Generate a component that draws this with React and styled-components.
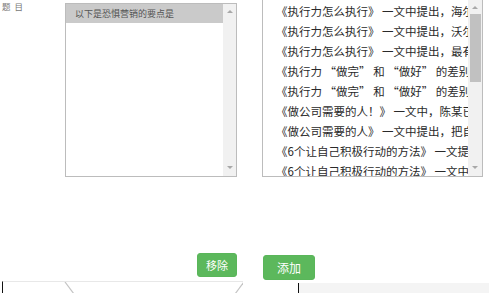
import React from 'react'
import styled, {createGlobalStyle} from "styled-components";

const leftItems = ['以下是恐惧营销的要点是']

const rightItems = [
    '《执行力怎么执行》 一文中提出，海尔',
    '《执行力怎么执行》 一文中提出，沃尔',
    '《执行力怎么执行》 一文中提出，最有',
    '《执行力 “做完” 和 “做好” 的差别》',
    '《执行力 “做完” 和 “做好” 的差别》',
    '《做公司需要的人！》 一文中，陈某已',
    '《做公司需要的人》 一文中提出，把自',
    '《6个让自己积极行动的方法》 一文提出',
    '《6个让自己积极行动的方法》 一文中',
]

function ScrollBar({ width, thumb }) {
    return (
        <StyledScrollBar $width={width}>
            <Arrow $up />
            {thumb ? <Thumb $height={thumb} /> : null}
            <Spacer />
            <Arrow />
        </StyledScrollBar>
    )
}

function App() {
    return (
        <>
            <GlobalStyle />
            <Page>
                <Top>
                    <Label>题 目</Label>
                    <ListBox $width={172} $height={174} $top={3} $gap={25}>
                        <Options>
                            {leftItems.map((item, index) => <LeftOption key={index} $selected={index === 0}>{item}</LeftOption>)}
                        </Options>
                        <ScrollBar width={13} />
                    </ListBox>
                    <ListBox $width={221} $height={177} $top={0} $noTop>
                        <Options>
                            {rightItems.map((item, index) => <RightOption key={index}>{item}</RightOption>)}
                        </Options>
                        <ScrollBar width={14} thumb={68} />
                    </ListBox>
                </Top>
                <Buttons>
                    <Button $left={197} $width={40} $height={24} $size={11}>移除</Button>
                    <Button $left={26} $width={52} $height={25} $size={12} $top={2}>添加</Button>
                </Buttons>
                <Bottom>
                    <Fieldset>
                        <svg width="241" height="12" viewBox="0 0 241 12">
                            <line x1="63" y1="0" x2="72" y2="12" stroke="#c4c4c4" strokeWidth="1.2" />
                            <line x1="242" y1="0" x2="233" y2="12" stroke="#c4c4c4" strokeWidth="1.2" />
                        </svg>
                    </Fieldset>
                    <GreyPanel />
                </Bottom>
            </Page>
        </>
    )
}

const GlobalStyle = createGlobalStyle`
  body {
    margin: 0;
    background: #fff;
    overflow: hidden;
    font-family: "Noto Sans CJK SC", "Liberation Sans", sans-serif;
  }
`

const Page = styled.div`
  width: 489px;
  height: 293px;
  overflow: hidden;
`

const Top = styled.div`
  display: flex;
  align-items: flex-start;
`

const Label = styled.div`
  flex-shrink: 0;
  box-sizing: border-box;
  width: 65px;
  padding: 1px 0 0 2px;
  font-size: 8.5px;
  line-height: 10px;
  letter-spacing: 1px;
  color: #777;
  white-space: pre;
`

const ListBox = styled.div`
  display: flex;
  flex-shrink: 0;
  box-sizing: border-box;
  width: ${p => p.$width}px;
  height: ${p => p.$height}px;
  margin-top: ${p => p.$top}px;
  margin-right: ${p => p.$gap || 0}px;
  border: 1px solid #bcbcbc;
  border-top: ${p => p.$noTop ? 'none' : '1px solid #bcbcbc'};
  background: #fff;
  overflow: hidden;
`

const Options = styled.div`
  flex: 1;
  min-width: 0;
  overflow: hidden;
`

const LeftOption = styled.div`
  height: 19px;
  padding-left: 9px;
  font-size: 9px;
  line-height: 19px;
  color: #555;
  white-space: nowrap;
  background: ${p => p.$selected ? '#cacaca' : 'transparent'};
`

const RightOption = styled.div`
  height: 20px;
  padding-left: 13px;
  font-size: 11.5px;
  line-height: 20px;
  color: #2a2a2a;
  white-space: nowrap;
  overflow: hidden;
  &:first-child {
    margin-top: 1px;
  }
`

const StyledScrollBar = styled.div`
  display: flex;
  flex-direction: column;
  align-items: center;
  width: ${p => p.$width}px;
  flex-shrink: 0;
  background: #f1f1f1;
`

const Arrow = styled.div`
  width: 0;
  height: 0;
  margin: ${p => p.$up ? '6px 0 6px' : '6px 0 7px'};
  border-left: 3px solid transparent;
  border-right: 3px solid transparent;
  ${p => p.$up ? 'border-bottom: 3px solid #a8a8a8;' : 'border-top: 3px solid #a8a8a8;'}
`

const Thumb = styled.div`
  width: 11px;
  height: ${p => p.$height}px;
  background: #c1c1c1;
  margin-top: -1px;
`

const Spacer = styled.div`
  flex: 1;
`

const Buttons = styled.div`
  display: flex;
  align-items: flex-start;
  height: 28px;
  margin-top: 76px;
`

const Button = styled.button`
  box-sizing: border-box;
  flex-shrink: 0;
  width: ${p => p.$width}px;
  height: ${p => p.$height}px;
  margin-left: ${p => p.$left}px;
  margin-top: ${p => p.$top || 0}px;
  padding: 0;
  border: 1px solid #5ab65a;
  border-radius: 3px;
  background: #5cb85c;
  color: #fff;
  font-family: "Noto Sans CJK SC", sans-serif;
  font-size: ${p => p.$size}px;
  line-height: 1;
`

const Bottom = styled.div`
  display: flex;
  align-items: flex-start;
  padding-left: 2px;
`

const Fieldset = styled.div`
  box-sizing: border-box;
  flex-shrink: 0;
  width: 241px;
  height: 13px;
  border-top: 1px solid #e8e8e8;
  border-left: 1px solid #111;
  svg {
    display: block;
    margin-left: -1px;
  }
`

const GreyPanel = styled.div`
  flex: 1;
  height: 11px;
  margin: 2px 0 0 55px;
  border-left: 1px solid #111;
  background: #f4f4f4;
`

export default App
